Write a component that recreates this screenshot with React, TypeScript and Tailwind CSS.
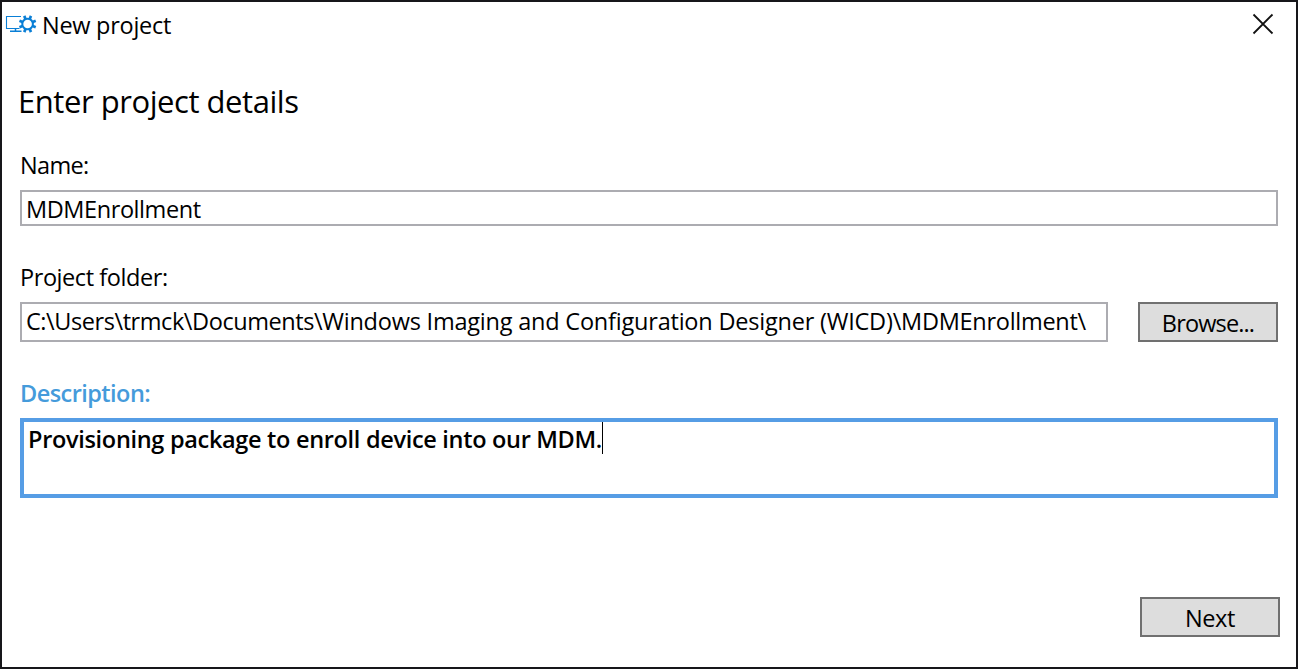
import type { ReactNode } from "react";

const teeth = [22.5, 67.5, 112.5, 157.5, 202.5, 247.5, 292.5, 337.5];

function ProjectIcon() {
  return (
    <svg width="32" height="20" viewBox="5 14 32 20" fill="none" stroke="#0a7fd6" className="mt-[5px] shrink-0">
      <path d="M21 16.5H6.5V28.5H19.5" strokeWidth="1.1" />
      <path d="M15.5 28.5V31M10 31.3H21.5" strokeWidth="1.5" />
      <circle cx="27.6" cy="24" r="5.3" strokeWidth="2" />
      {teeth.map((a) => (
        <path key={a} d="M27.6 18.5V15.2" strokeWidth="2.7" transform={`rotate(${a} 27.6 24)`} />
      ))}
    </svg>
  );
}

function CloseIcon() {
  return (
    <svg width="22" height="22" viewBox="0 0 22 22" fill="none" stroke="#111" strokeWidth="1.8">
      <path d="M1.5 1.5L20.5 20.5M20.5 1.5L1.5 20.5" />
    </svg>
  );
}

function Button({ children, className }: { children: ReactNode; className: string }) {
  return (
    <button className={`flex h-10 w-[140px] shrink-0 justify-center border-2 border-[#707070] bg-[#dddddd] pt-[3px] ${className}`}>
      {children}
    </button>
  );
}

export default function App() {
  return (
    <main className="flex h-[669px] w-[1298px] flex-col border-2 border-[#17171a] bg-white font-['Open_Sans',sans-serif] text-[23.5px] leading-8 whitespace-nowrap text-black">
      <header className="flex h-[77px] items-start pt-[7px] pr-[22px] pl-[3px]">
        <ProjectIcon />
        <h1 className="ml-[5px] grow tracking-[-0.27px]">New project</h1>
        <button aria-label="Close" className="mt-1">
          <CloseIcon />
        </button>
      </header>
      <form className="flex grow flex-col px-[18px]">
        <h2 className="-ml-0.5 text-[31px] leading-[44px] tracking-[-0.45px]">Enter project details</h2>

        <label className="mt-[26px] flex flex-col gap-[9px]">
          <span className="tracking-[-0.65px]">Name:</span>
          <span className="h-9 border-2 border-[#acacb1] pt-px pl-1 tracking-[-0.42px]">MDMEnrollment</span>
        </label>

        <div className="mt-[35px] flex items-end gap-[30px]">
          <label className="flex grow flex-col gap-[9px]">
            <span className="tracking-[-0.43px]">Project folder:</span>
            <span className="h-10 border-2 border-[#acacb1] pt-px pl-1 tracking-[-0.28px]">
              <span className="tracking-[-0.43px]">C:\Users\trmck\Documents\</span>
              <span className="tracking-[-0.21px]">Windows Imaging and Configuration Designer (WICD)\</span>
              MDMEnrollment\
            </span>
          </label>
          <Button className="tracking-[-0.85px]">Browse...</Button>
        </div>

        <label className="mt-[35px] flex flex-col gap-[9px] font-semibold">
          <span className="tracking-[-0.55px] text-[#459bdb]">Description:</span>
          <span className="flex h-20 border-4 border-[#569de5] pl-1 tracking-[-0.31px]">
            <span className="pt-px">Provisioning package to enroll device into our MDM.</span>
            <span className="h-8 w-px bg-black" />
          </span>
        </label>

        <Button className="mt-[99px] -mr-0.5 self-end tracking-[-0.4px]">Next</Button>
      </form>
    </main>
  );
}
